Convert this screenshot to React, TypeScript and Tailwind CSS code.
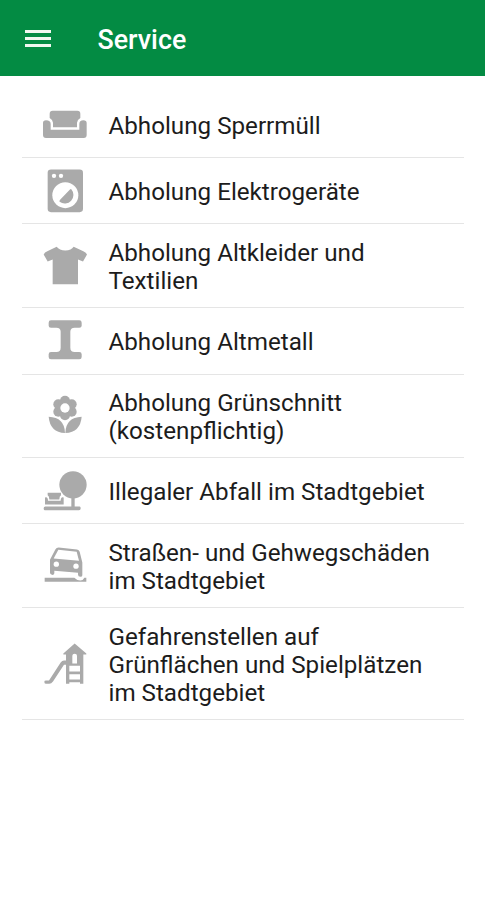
import type { ReactNode } from "react";

type Item = { lines: string[]; height: string; viewBox: string; icon: ReactNode };

const items: Item[] = [
  {
    lines: ["Abholung Sperrmüll"],
    height: "h-[67px] [&>p]:pt-1",
    viewBox: "63 15 144 144",
    icon: (
      <>
        <path d="M98 47H172Q181 47 181 56V69Q172 74 171 83V97H99V83Q98 74 89 69V56Q89 47 98 47Z" />
        <path d="M69 84Q69 76 78 76Q92 76 92 87V104H178V87Q178 76 190 76Q200 76 200 84V120Q200 129 191 129H78Q69 129 69 120Z" />
      </>
    ),
  },
  {
    lines: ["Abholung Elektrogeräte"],
    height: "h-[66px]",
    viewBox: "63 19.5 144 144",
    icon: (
      <>
        <rect x="83" y="27" width="106" height="128" rx="10" />
        <circle cx="102" cy="46" r="6.5" fill="white" />
        <circle cx="123" cy="46" r="6.5" fill="white" />
        <circle cx="136" cy="104" r="39" fill="white" />
        <path d="M154 86A26 26 0 0 1 119 124Q116 122 121 117L147 90Q151 84 154 86Z" />
      </>
    ),
  },
  {
    lines: ["Abholung Altkleider und", "Textilien"],
    height: "h-[84px]",
    viewBox: "63 34.5 144 144",
    icon: (
      <path d="M110 49Q118 60 136 60Q154 60 161 49L190 62Q199 66 201 72L189 93L174 87V161H98V87L83 93L71 72Q74 65 82 62Z" />
    ),
  },
  {
    lines: ["Abholung Altmetall"],
    height: "h-[67px]",
    viewBox: "63 36 144 144",
    icon: (
      <path d="M93 46H178Q185 46 185 53V62Q185 68 178 68H164Q151 68 151 80V128Q151 141 164 141H178Q185 141 185 148V156Q185 163 178 163H93Q86 163 86 156V148Q86 141 93 141H109Q122 141 122 128V80Q122 68 109 68H93Q86 68 86 62V53Q86 46 93 46Z" />
    ),
  },
  {
    lines: ["Abholung Grünschnitt", "(kostenpflichtig)"],
    height: "h-[83px]",
    viewBox: "63 36 144 144",
    icon: (
      <>
        <circle cx="135" cy="62" r="15" />
        <circle cx="155" cy="73" r="15" />
        <circle cx="155" cy="95" r="15" />
        <circle cx="135" cy="106" r="15" />
        <circle cx="115" cy="95" r="15" />
        <circle cx="115" cy="73" r="15" />
        <circle cx="135" cy="84" r="24" />
        <circle cx="135" cy="84" r="14" fill="white" />
        <path d="M86 110Q134 112 135 159Q90 157 86 110Z" />
        <path d="M185 110Q137 112 136 159Q181 157 185 110Z" />
      </>
    ),
  },
  {
    lines: ["Illegaler Abfall im Stadtgebiet"],
    height: "h-[66px]",
    viewBox: "63 34.5 144 144",
    icon: (
      <>
        <circle cx="159" cy="88" r="41" />
        <path d="M154 124H164V153H179Q182 153 182 158Q182 164 177 164H74Q71 164 71 158Q71 153 76 153H154Z" />
        <path d="M83 112H123V119Q118 122 118 132H88Q88 122 83 119Z" />
        <path d="M75 126Q84 123 84 136H122Q122 123 131 126V147H75Z" />
      </>
    ),
  },
  {
    lines: ["Straßen- und Gehwegschäden", "im Stadtgebiet"],
    height: "h-[84px]",
    viewBox: "63 34.5 144 144",
    icon: (
      <>
        <path d="M116 51L171 57Q177 58 179 64L187 96V134Q187 139 181 139Q174 139 174 132V127L103 121V128Q102 134 96 133Q90 132 90 127V88L106 57Q109 51 116 51Z" />
        <path d="M115 58L170 64L177 91L101 84Z" fill="white" />
        <circle cx="109" cy="101" r="8" fill="white" />
        <circle cx="168" cy="107" r="8" fill="white" />
        <path d="M74 142H163Q170 150 181 150Q190 150 193 142H199V154H74Z" />
      </>
    ),
  },
  {
    lines: ["Gefahrenstellen auf", "Grünflächen und Spielplätzen", "im Stadtgebiet"],
    height: "h-[112px]",
    viewBox: "63 28.5 144 144",
    icon: (
      <>
        <path d="M164 39L199 69V72H190V160H180V155H148V160H138V103H132L99 153Q94 160 88 160H77Q73 160 73 154Q73 150 78 150H87L122 96Q126 90 132 90H138V72H130V69Z" />
        <path
          d="M157 99V76Q157 70 164 70Q171 70 171 76V99ZM148 106H180V123H148ZM148 131H180V147H148Z"
          fill="white"
        />
      </>
    ),
  },
];

export default function App() {
  return (
    <div className="min-h-[900px] w-full bg-white font-['Roboto',sans-serif]">
      <header className="flex h-[76px] items-center bg-[#038b43] pl-[25px] text-white">
        <button aria-label="Menü" className="flex w-[26px] flex-col gap-1">
          <span className="h-[3px] bg-[#f0f8f0]" />
          <span className="h-[3px] bg-[#f0f8f0]" />
          <span className="h-[3px] bg-[#f0f8f0]" />
        </button>
        <h1 className="ml-[46.5px] pt-1 text-[26.8px] font-medium leading-8">Service</h1>
      </header>
      <ul className="ml-[22px] mr-[21px] pt-[15px]">
        {items.map((item) => (
          <li
            key={item.lines[0]}
            className={`flex items-center border-b border-[#e5e5e5] pl-[19px] ${item.height}`}
          >
            <svg viewBox={item.viewBox} className="size-12 shrink-0" fill="#aaaaaa" aria-hidden="true">
              {item.icon}
            </svg>
            <p className="ml-[19.5px] whitespace-nowrap pt-0.5 text-[24.2px] leading-7 text-[#1c1c1c]">
              {item.lines.map((line) => (
                <span key={line} className="block">
                  {line}
                </span>
              ))}
            </p>
          </li>
        ))}
      </ul>
    </div>
  );
}
